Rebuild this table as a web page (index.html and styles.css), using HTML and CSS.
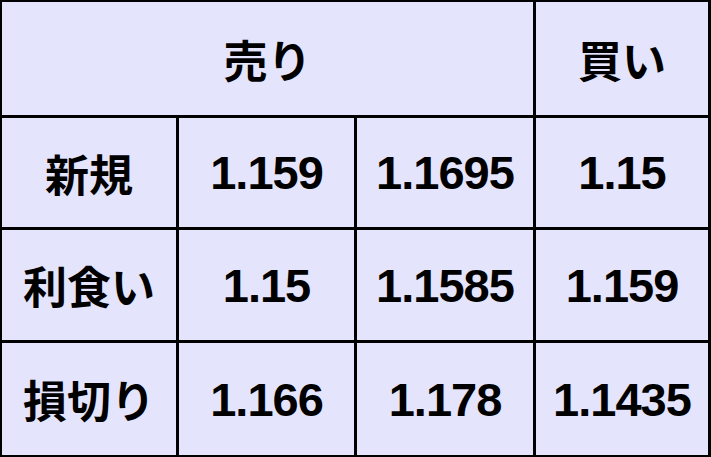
FILE: index.html
```html
<!DOCTYPE html>
<html lang="ja">
<head>
<meta charset="utf-8">
<link rel="stylesheet" href="styles.css">
</head>
<body>
<div class="table">
  <div class="cell head span3">売り</div>
  <div class="cell head">買い</div>

  <div class="cell head">新規</div>
  <div class="cell num">1.159</div>
  <div class="cell num">1.1695</div>
  <div class="cell num">1.15</div>

  <div class="cell head">利食い</div>
  <div class="cell num">1.15</div>
  <div class="cell num">1.1585</div>
  <div class="cell num">1.159</div>

  <div class="cell head">損切り</div>
  <div class="cell num">1.166</div>
  <div class="cell num">1.178</div>
  <div class="cell num">1.1435</div>
</div>
</body>
</html>
```
FILE: styles.css
```css
html, body {
  margin: 0;
  padding: 0;
  background: #e4e4fc;
}
.table {
  width: 711px;
  height: 457px;
  box-sizing: border-box;
  background: #000;
  padding: 2px 3px 2px 2px;
  display: grid;
  grid-template-columns: 174px 175px 176px 172px;
  grid-template-rows: 113px 109px 110px 112px;
  gap: 3px;
}
.cell {
  background: #e4e4fc;
  display: flex;
  align-items: center;
  justify-content: center;
  color: #000;
}
.span3 {
  grid-column: span 3;
}
.head {
  font-family: "Noto Sans CJK JP", "Liberation Sans", sans-serif;
  font-weight: 700;
  font-size: 44px;
}
.num {
  font-family: "Liberation Sans", Arial, sans-serif;
  font-weight: 700;
  font-size: 47px;
  letter-spacing: -1px;
}
```
